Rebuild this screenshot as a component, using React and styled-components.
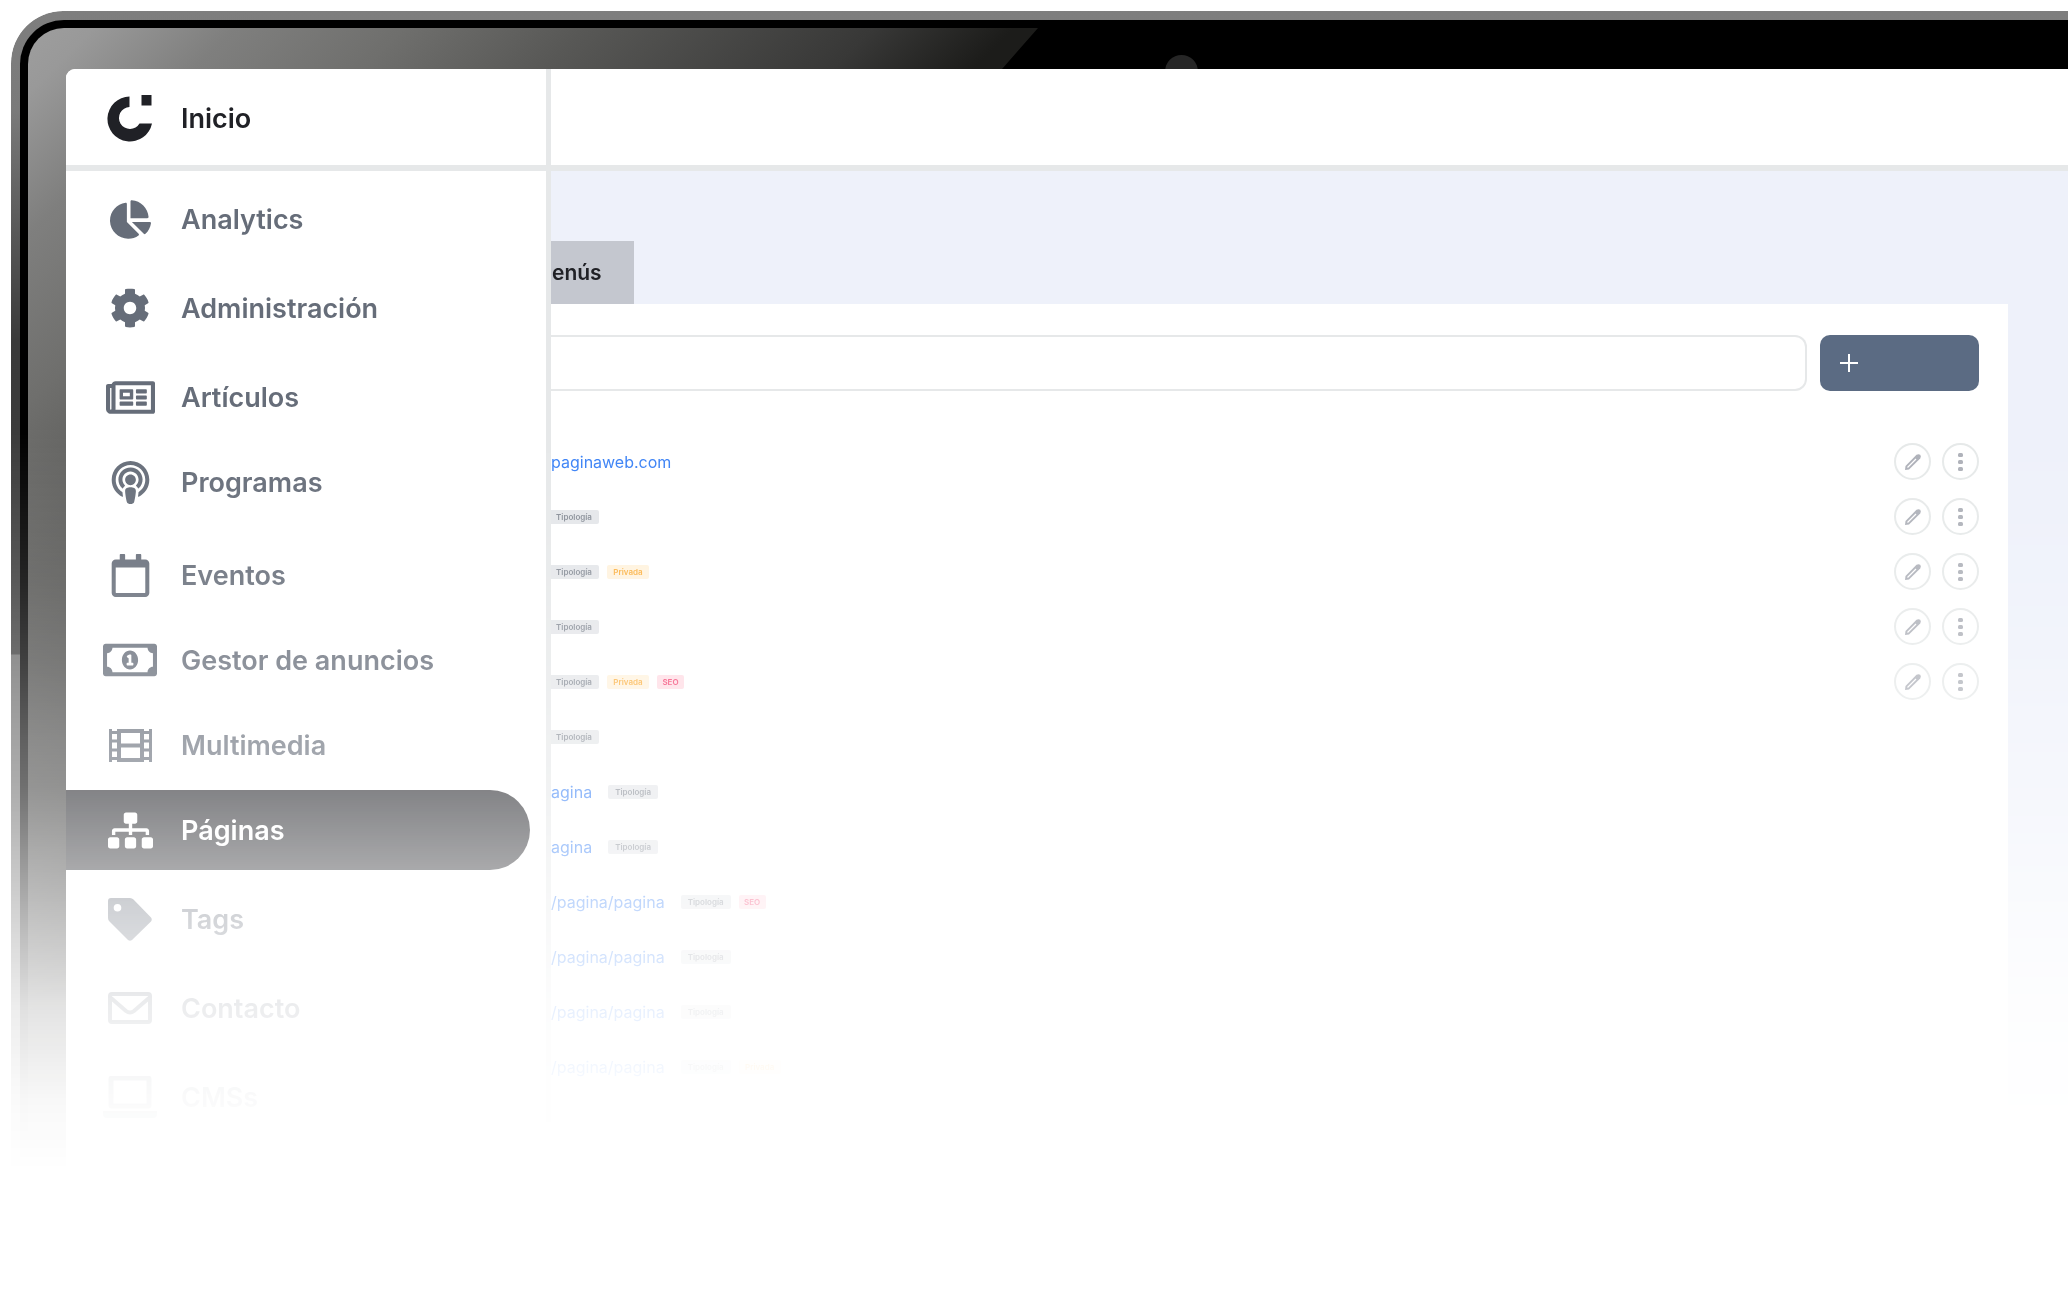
import styled, { createGlobalStyle } from 'styled-components';
import {
  FaChartPie,
  FaCog,
  FaPodcast,
  FaRegCalendar,
  FaRegMoneyBillAlt,
  FaRegNewspaper,
  FaSitemap,
} from 'react-icons/fa';

const GlobalStyle = createGlobalStyle`
  * {
    box-sizing: border-box;
  }
  body {
    margin: 0;
    background: #fff;
    font-family: Inter, 'Liberation Sans', sans-serif;
    overflow-x: hidden;
  }
  button, input {
    font: inherit;
  }
  ul {
    list-style: none;
    margin: 0;
    padding: 0;
  }
`;

const Page = styled.div`
  min-height: 100vh;
  padding: 11px 0 0 11px;
`;

const Shell = styled.div`
  padding: 9px 0 0 9px;
  border-radius: 52px 0 0 0;
  background: linear-gradient(
    to bottom,
    #7e7e7e 0,
    #7a7a7a 100px,
    #3a3a3a 330px,
    #3d3d3d 643px,
    #6c6c6c 644px,
    #6c6c6c 100%
  );
  mask-image: linear-gradient(
    to bottom,
    #000 36%,
    rgba(0, 0, 0, 0.95) 41%,
    rgba(0, 0, 0, 0.86) 49%,
    rgba(0, 0, 0, 0.75) 56%,
    rgba(0, 0, 0, 0.62) 63%,
    rgba(0, 0, 0, 0.56) 67%,
    rgba(0, 0, 0, 0.39) 74%,
    rgba(0, 0, 0, 0.27) 79%,
    rgba(0, 0, 0, 0.12) 86%,
    rgba(0, 0, 0, 0.03) 94%,
    transparent 100%
  );
`;

const Rim = styled.div`
  padding: 8px 0 0 8px;
  border-radius: 44px 0 0 0;
  background: #000;
`;

const Bezel = styled.div`
  position: relative;
  padding: 41px 0 0 38px;
  border-radius: 36px 0 0 0;
  overflow: hidden;
  background: #000;
`;

const Glare = styled.div`
  position: absolute;
  top: 0;
  left: 0;
  width: 1010px;
  height: 100%;
  background: linear-gradient(
    135deg,
    #9e9e9e 0,
    #999 46px,
    #7f7f7e 145px,
    #6f6f6d 265px,
    #585856 392px,
    #383837 598px,
    #1c1c1a 697px
  );
  clip-path: polygon(
    0 0,
    100% 0,
    calc(100% - 36px) 41px,
    80px 100%,
    0 100%
  );
`;

const Camera = styled.div`
  position: absolute;
  top: 27px;
  left: 1137px;
  width: 33px;
  height: 33px;
  border-radius: 50%;
  background: #262626;
`;

const Screen = styled.div`
  position: relative;
  display: flex;
  border-radius: 9px 0 0 0;
  overflow: hidden;
  background: #fff;
`;

const Sidebar = styled.aside`
  position: relative;
  z-index: 1;
  flex: 0 0 485px;
  border-right: 5px solid #e6e8e9;
  background: #fff;
  padding-bottom: 33px;
`;

const Brand = styled.a`
  display: flex;
  align-items: center;
  gap: 23px;
  height: 102px;
  padding: 2px 0 0 36px;
  border-bottom: 6px solid #e6e8e9;
  color: #202126;
  font-size: 27px;
  font-weight: 600;
  text-decoration: none;
`;

const IconCell = styled.span`
  display: flex;
  flex: 0 0 56px;
  justify-content: center;
`;

const Menu = styled.ul`
  padding-top: 8px;
`;

const MenuItem = styled.li`
  margin-bottom: ${({ $gap }) => $gap}px;
`;

const MenuLink = styled.a`
  display: flex;
  align-items: center;
  gap: 23px;
  height: 80px;
  margin-right: 16px;
  padding-left: 36px;
  border-radius: 0 40px 40px 0;
  background: ${({ $active }) => ($active ? '#202126' : 'transparent')};
  color: ${({ $active }) => ($active ? '#fff' : '#666d79')};
  font-size: 27px;
  font-weight: 600;
  text-decoration: none;
`;

const Content = styled.div`
  flex: 1;
  min-width: 0;
  display: flex;
  flex-direction: column;
  margin-left: -2px;
`;

const Header = styled.header`
  flex: 0 0 102px;
  border-bottom: 6px solid #e6e8e9;
`;

const Main = styled.main`
  flex: 1;
  display: flex;
  flex-direction: column;
  align-items: flex-start;
  padding: 70px 60px 0 0;
  background: #eef1fa;
`;

const Tab = styled.button`
  height: 63px;
  padding: 0 32px 0 3px;
  border: 0;
  background: #c4c7cf;
  color: #202126;
  font-size: 21px;
  font-weight: 600;
`;

const Panel = styled.section`
  flex: 1;
  align-self: stretch;
  padding: 31px 29px 0 0;
  background: #fff;
`;

const Toolbar = styled.div`
  display: flex;
  gap: 13px;
  height: 56px;
  margin-bottom: 43px;
`;

const SearchInput = styled.input`
  flex: 1;
  min-width: 0;
  padding: 0 20px;
  border: 2px solid #e6e8e9;
  border-left: 0;
  border-radius: 0 12px 12px 0;
  background: #fff;
  font-size: 16px;
`;

const AddButton = styled.button`
  display: flex;
  align-items: center;
  width: 159px;
  padding: 0 20px;
  border: 0;
  border-radius: 10px;
  background: #5b6b83;
  color: #fff;
`;

const Row = styled.li`
  display: flex;
  align-items: center;
  height: 55px;
`;

const PageLink = styled.a`
  margin-right: 16px;
  padding-left: 2px;
  color: #3b82f6;
  font-size: 16px;
  text-decoration: none;
`;

const tagColors = {
  Tipología: ['#e4e6e9', '#858b95', 50],
  Privada: ['#fff2dd', '#fbb040', 42],
  SEO: ['#ffdbe3', '#f43f6e', 27],
};

const Tag = styled.span`
  min-width: ${({ $kind }) => tagColors[$kind][2]}px;
  height: 14px;
  margin-right: 8px;
  border-radius: 2px;
  background: ${({ $kind }) => tagColors[$kind][0]};
  color: ${({ $kind }) => tagColors[$kind][1]};
  font-size: 8px;
  font-weight: 600;
  line-height: 14px;
  text-align: center;
`;

const Actions = styled.div`
  display: flex;
  gap: 11px;
  margin-left: auto;
`;

const RoundButton = styled.button`
  display: flex;
  align-items: center;
  justify-content: center;
  width: 37px;
  height: 37px;
  padding: 0;
  border: 2px solid #e6e9e9;
  border-radius: 50%;
  background: #fff;
  color: #adb0b8;
`;

function Logo() {
  return (
    <svg width="46" height="47" viewBox="0 0 46 47" fill="currentColor">
      <path d="M22.5 1.5A22.5 22.5 0 1 0 45 28.5H32.5A11 11 0 1 1 22.5 12z" />
      <path d="M34.5 0H44.5V10.5H34.5z" />
    </svg>
  );
}

function FilmIcon() {
  return (
    <svg width="43" height="33" viewBox="0 0 43 33" fill="none">
      <g stroke="currentColor">
        <path d="M1.5 0V33M41.5 0V33" strokeWidth="3" />
        <path d="M10 0V33M33 0V33" strokeWidth="4" />
        <path d="M8 2H35M8 16.5H35M8 31H35" strokeWidth="4" />
        <path
          d="M1 3.5H8M1 12H8M1 21H8M1 29.5H8M35 3.5H42M35 12H42M35 21H42M35 29.5H42"
          strokeWidth="3"
        />
      </g>
    </svg>
  );
}

function TagIcon() {
  return (
    <svg width="44" height="43" viewBox="0 0 44 43" fill="currentColor">
      <path
        fillRule="evenodd"
        d="M3 0H22Q24 0 25.500 1.500L43 19.500Q44.500 21.500 43 23.500L24 42Q22 43.500 20 42L1.500 23.500Q0 22 0 20V3Q0 0 3 0ZM9.500 6A3.800 3.800 0 1 0 9.500 13.600A3.800 3.800 0 1 0 9.500 6Z"
      />
    </svg>
  );
}

function MailIcon() {
  return (
    <svg width="44" height="32" viewBox="0 0 44 32" fill="none">
      <g stroke="currentColor" strokeWidth="4">
        <rect x="2" y="2" width="40" height="28" rx="2" />
        <path d="M3 6L18 19Q22 22 26 19L41 6" />
      </g>
    </svg>
  );
}

function LaptopIcon() {
  return (
    <svg width="54" height="43" viewBox="0 0 54 43">
      <rect
        x="8"
        y="2"
        width="38"
        height="28"
        rx="1"
        fill="none"
        stroke="currentColor"
        strokeWidth="5"
      />
      <path d="M0 35H54V38Q54 42 50 42H4Q0 42 0 38Z" fill="currentColor" />
    </svg>
  );
}

function PlusIcon() {
  return (
    <svg width="18" height="18" viewBox="0 0 18 18">
      <path d="M9 0V18M0 9H18" stroke="currentColor" strokeWidth="2" />
    </svg>
  );
}

function PencilIcon() {
  return (
    <svg width="18" height="18" viewBox="0 0 18 18">
      <path
        d="M1 17L1.500 13L12.500 1.800Q14.500 0.500 16.200 1.800Q17.500 3.500 16.200 5.500L5 16.500Z"
        fill="currentColor"
      />
      <path d="M3.500 14.500L12 6" stroke="#fff" strokeWidth="1.2" />
    </svg>
  );
}

function DotsIcon() {
  return (
    <svg width="5" height="20" viewBox="0 0 5 20" fill="currentColor">
      <rect x="0" y="1" width="5" height="4" rx="1.5" />
      <rect x="0" y="8" width="5" height="4" rx="1.5" />
      <rect x="0" y="15" width="5" height="4" rx="1.5" />
    </svg>
  );
}

const menu = [
  { label: 'Analytics', icon: <FaChartPie size={41} />, gap: 9 },
  { label: 'Administración', icon: <FaCog size={40} />, gap: 9 },
  { label: 'Artículos', icon: <FaRegNewspaper size={49} />, gap: 5 },
  { label: 'Programas', icon: <FaPodcast size={43} />, gap: 13 },
  { label: 'Eventos', icon: <FaRegCalendar size={43} />, gap: 5 },
  { label: 'Gestor de anuncios', icon: <FaRegMoneyBillAlt size={54} />, gap: 5 },
  { label: 'Multimedia', icon: <FilmIcon />, gap: 5 },
  { label: 'Páginas', icon: <FaSitemap size={45} />, gap: 9, active: true },
  { label: 'Tags', icon: <TagIcon />, gap: 9 },
  { label: 'Contacto', icon: <MailIcon />, gap: 9 },
  { label: 'CMSs', icon: <LaptopIcon />, gap: 0 },
];

const rows = [
  { url: 'paginaweb.com', tags: [], actions: true },
  { tags: ['Tipología'], actions: true },
  { tags: ['Tipología', 'Privada'], actions: true },
  { tags: ['Tipología'], actions: true },
  { tags: ['Tipología', 'Privada', 'SEO'], actions: true },
  { tags: ['Tipología'] },
  { url: 'agina', tags: ['Tipología'] },
  { url: 'agina', tags: ['Tipología'] },
  { url: '/pagina/pagina', tags: ['Tipología', 'SEO'] },
  { url: '/pagina/pagina', tags: ['Tipología'] },
  { url: '/pagina/pagina', tags: ['Tipología'] },
  { url: '/pagina/pagina', tags: ['Tipología', 'Privada'] },
];

function PageRow({ row }) {
  return (
    <Row>
      {row.url && <PageLink href="#">{row.url}</PageLink>}
      {row.tags.map((tag) => (
        <Tag key={tag} $kind={tag}>
          {tag}
        </Tag>
      ))}
      {row.actions && (
        <Actions>
          <RoundButton aria-label="Editar">
            <PencilIcon />
          </RoundButton>
          <RoundButton aria-label="Más opciones">
            <DotsIcon />
          </RoundButton>
        </Actions>
      )}
    </Row>
  );
}

function App() {
  return (
    <Page>
      <GlobalStyle />
      <Shell>
        <Rim>
          <Bezel>
            <Glare />
            <Camera />
            <Screen>
              <Sidebar>
                <Brand href="#">
                  <IconCell>
                    <Logo />
                  </IconCell>
                  Inicio
                </Brand>
                <nav>
                  <Menu>
                    {menu.map((item) => (
                      <MenuItem key={item.label} $gap={item.gap}>
                        <MenuLink href="#" $active={item.active}>
                          <IconCell>{item.icon}</IconCell>
                          {item.label}
                        </MenuLink>
                      </MenuItem>
                    ))}
                  </Menu>
                </nav>
              </Sidebar>
              <Content>
                <Header />
                <Main>
                  <Tab type="button">enús</Tab>
                  <Panel>
                    <Toolbar>
                      <SearchInput type="text" aria-label="Buscar" />
                      <AddButton type="button" aria-label="Añadir">
                        <PlusIcon />
                      </AddButton>
                    </Toolbar>
                    <ul>
                      {rows.map((row, index) => (
                        <PageRow key={index} row={row} />
                      ))}
                    </ul>
                  </Panel>
                </Main>
              </Content>
            </Screen>
          </Bezel>
        </Rim>
      </Shell>
    </Page>
  );
}

export default App;
